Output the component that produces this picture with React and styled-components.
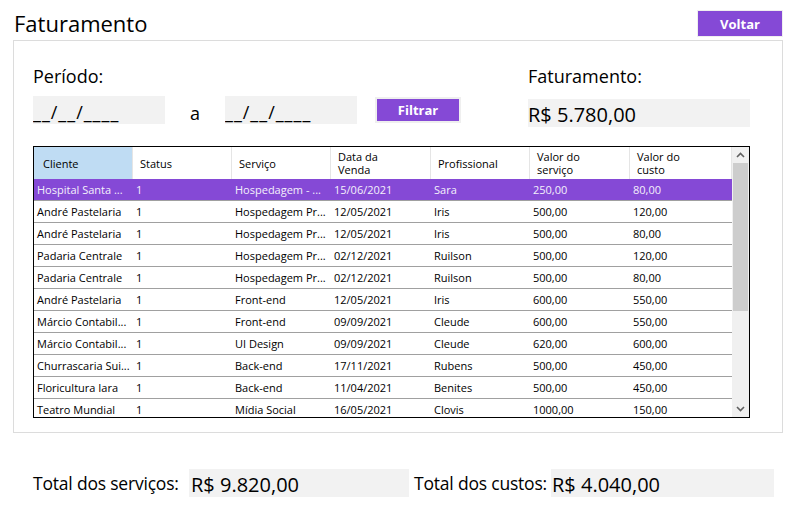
import styled, { createGlobalStyle } from "styled-components";

const GlobalStyle = createGlobalStyle`
  html, body {
    margin: 0;
    padding: 0;
    background: #ffffff;
  }
  body {
    font-family: "Open Sans", "Noto Sans", sans-serif;
    color: #000000;
  }
`;

const PURPLE = "#8549d6";

const Page = styled.div`
  width: 792px;
  height: 509px;
  overflow: hidden;
`;

const TopBar = styled.header`
  display: flex;
  justify-content: space-between;
  align-items: flex-start;
  height: 30px;
  padding: 10px 9px 0 14px;
`;

const Title = styled.h1`
  margin: 0;
  font-size: 22px;
  font-weight: 400;
  line-height: 26px;
`;

const PurpleButton = styled.button`
  display: flex;
  align-items: center;
  justify-content: center;
  width: ${(p) => p.$w}px;
  height: ${(p) => p.$h}px;
  padding: 0;
  background: ${PURPLE};
  border: ${(p) => p.$ring}px solid #efefef;
  color: #ffffff;
  font-family: "Open Sans", sans-serif;
  font-size: 13px;
  font-weight: 700;
  cursor: pointer;
`;

const Panel = styled.section`
  margin: 0 9px 0 13px;
  border: 1px solid #dcdcdc;
  padding: 23px 32px 14px 19px;
  height: 393px;
  box-sizing: border-box;
`;

const FormGrid = styled.div`
  display: grid;
  grid-template-columns: 495px 222px;
  grid-template-rows: 24px 31px;
  row-gap: 8px;
`;

const Label = styled.div`
  font-size: 18px;
  line-height: 24px;
`;

const InputsRow = styled.div`
  display: flex;
  align-items: flex-start;
`;

const Field = styled.div`
  display: flex;
  align-items: flex-end;
  width: ${(p) => p.$w}px;
  height: 28px;
  margin-top: ${(p) => p.$top || 0}px;
  padding-left: ${(p) => p.$pad || 0}px;
  box-sizing: border-box;
  background: #f2f2f2;
  font-size: ${(p) => p.$size}px;
  letter-spacing: ${(p) => p.$track || 0}px;
  line-height: 24px;
  white-space: nowrap;
  overflow: hidden;
`;

const Sep = styled.span`
  width: 60px;
  text-align: center;
  font-size: 18px;
  line-height: 34px;
`;

const FilterWrap = styled.div`
  margin: 1px 0 0 18px;
`;

const Table = styled.div`
  display: flex;
  margin-top: 19px;
  width: 717px;
  height: 272px;
  border: 1px solid #000000;
  box-sizing: border-box;
`;

const GridArea = styled.div`
  flex: 1;
  overflow: hidden;
`;

const Row = styled.div`
  display: grid;
  grid-template-columns: 99px 99px 99px 100px 99px 100px 1fr;
  height: ${(p) => (p.$head ? 32 : 22)}px;
  box-sizing: border-box;
  border-bottom: ${(p) => (p.$head ? "none" : "1px solid #a0a0a0")};
  background: ${(p) => (p.$selected ? PURPLE : "transparent")};
  color: ${(p) => (p.$selected ? "#f4f0fb" : "#000000")};
`;

const HeadCell = styled.div`
  display: flex;
  align-items: center;
  padding-left: ${(p) => (p.$active ? 9 : 7)}px;
  border-right: 1px solid #e5e5e5;
  background: ${(p) => (p.$active ? "#bfdcf3" : "#ffffff")};
  font-size: 11px;
  line-height: 13px;
  white-space: pre-line;
`;

const Cell = styled.div`
  display: flex;
  align-items: center;
  padding-left: 3px;
  font-size: 11px;
  white-space: nowrap;
  overflow: hidden;
`;

const ScrollBar = styled.div`
  display: flex;
  flex-direction: column;
  width: 17px;
  background: #f0f0f0;
`;

const ScrollArrow = styled.div`
  display: flex;
  align-items: center;
  justify-content: center;
  height: 16px;
`;

const Thumb = styled.div`
  height: 148px;
  margin: 0 1px;
  background: #cdcdcd;
`;

const Track = styled.div`
  flex: 1;
`;

const Totals = styled.div`
  display: flex;
  align-items: center;
  margin: 36px 0 0 33px;
  height: 28px;
`;

const TotalLabel = styled.div`
  width: ${(p) => p.$w}px;
  margin-left: ${(p) => p.$gap || 0}px;
  font-size: 17.5px;
  letter-spacing: -0.2px;
  line-height: 28px;
  white-space: nowrap;
`;

const Chevron = ({ up }) => (
  <svg width="9" height="6" viewBox="0 0 9 6">
    <path
      d={up ? "M1 5 L4.5 1.5 L8 5" : "M1 1 L4.5 4.5 L8 1"}
      fill="none"
      stroke="#606060"
      strokeWidth="1.6"
    />
  </svg>
);

const columns = [
  "Cliente",
  "Status",
  "Serviço",
  "Data da\nVenda",
  "Profissional",
  "Valor do\nserviço",
  "Valor do\ncusto",
];

const rows = [
  ["Hospital Santa ...", "1", "Hospedagem - ...", "15/06/2021", "Sara", "250,00", "80,00"],
  ["André Pastelaria", "1", "Hospedagem Pr...", "12/05/2021", "Iris", "500,00", "120,00"],
  ["André Pastelaria", "1", "Hospedagem Pr...", "12/05/2021", "Iris", "500,00", "80,00"],
  ["Padaria Centrale", "1", "Hospedagem Pr...", "02/12/2021", "Ruilson", "500,00", "120,00"],
  ["Padaria Centrale", "1", "Hospedagem Pr...", "02/12/2021", "Ruilson", "500,00", "80,00"],
  ["André Pastelaria", "1", "Front-end", "12/05/2021", "Iris", "600,00", "550,00"],
  ["Márcio Contabil...", "1", "Front-end", "09/09/2021", "Cleude", "600,00", "550,00"],
  ["Márcio Contabil...", "1", "UI Design", "09/09/2021", "Cleude", "620,00", "600,00"],
  ["Churrascaria Sui...", "1", "Back-end", "17/11/2021", "Rubens", "500,00", "450,00"],
  ["Floricultura Iara", "1", "Back-end", "11/04/2021", "Benites", "500,00", "450,00"],
  ["Teatro Mundial", "1", "Mídia Social", "16/05/2021", "Clovis", "1000,00", "150,00"],
];

export default function App() {
  return (
    <Page>
      <GlobalStyle />
      <TopBar>
        <Title>Faturamento</Title>
        <PurpleButton $w={86} $h={27} $ring={1}>
          Voltar
        </PurpleButton>
      </TopBar>

      <Panel>
        <FormGrid>
          <Label>Período:</Label>
          <Label>Faturamento:</Label>
          <InputsRow>
            <Field $w={132} $size={18} $track={1}>
              __/__/____
            </Field>
            <Sep>a</Sep>
            <Field $w={132} $size={18} $track={1}>
              __/__/____
            </Field>
            <FilterWrap>
              <PurpleButton $w={86} $h={26} $ring={2}>
                Filtrar
              </PurpleButton>
            </FilterWrap>
          </InputsRow>
          <Field $w={222} $size={20} $top={3}>
            R$ 5.780,00
          </Field>
        </FormGrid>

        <Table>
          <GridArea>
            <Row $head>
              {columns.map((c, i) => (
                <HeadCell key={c} $active={i === 0}>
                  {c}
                </HeadCell>
              ))}
            </Row>
            {rows.map((r, i) => (
              <Row key={i} $selected={i === 0}>
                {r.map((v, j) => (
                  <Cell key={j}>{v}</Cell>
                ))}
              </Row>
            ))}
          </GridArea>
          <ScrollBar>
            <ScrollArrow>
              <Chevron up />
            </ScrollArrow>
            <Thumb />
            <Track />
            <ScrollArrow>
              <Chevron />
            </ScrollArrow>
          </ScrollBar>
        </Table>
      </Panel>

      <Totals>
        <TotalLabel $w={156}>Total dos serviços:</TotalLabel>
        <Field $w={220} $size={20} $pad={2}>
          R$ 9.820,00
        </Field>
        <TotalLabel $w={137} $gap={5}>
          Total dos custos:
        </TotalLabel>
        <Field $w={223} $size={20} $pad={1}>
          R$ 4.040,00
        </Field>
      </Totals>
    </Page>
  );
}
